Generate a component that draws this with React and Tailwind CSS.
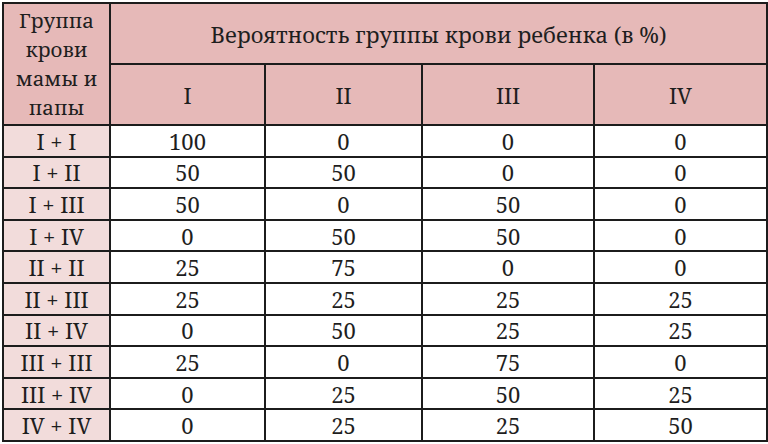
import React from 'react';

const rows = [
  ['I + I', '100', '0', '0', '0'],
  ['I + II', '50', '50', '0', '0'],
  ['I + III', '50', '0', '50', '0'],
  ['I + IV', '0', '50', '50', '0'],
  ['II + II', '25', '75', '0', '0'],
  ['II + III', '25', '25', '25', '25'],
  ['II + IV', '0', '50', '25', '25'],
  ['III + III', '25', '0', '75', '0'],
  ['III + IV', '0', '25', '50', '25'],
  ['IV + IV', '0', '25', '25', '50'],
];

const cell =
  "border-2 border-[#1c1c1c] text-center align-middle p-0 font-['Noto_Serif','DejaVu_Serif',serif] text-[22px] text-[#1e1e1e] font-normal";

const App = () => {
  return (
    <div className="w-[768px] h-[444px] bg-white pt-[2px] pl-[2px]">
      <table className="table-fixed border-collapse w-[764px] leading-none">
        <colgroup>
          <col className="w-[107px]" />
          <col className="w-[155px]" />
          <col className="w-[157px]" />
          <col className="w-[172px]" />
          <col className="w-[173px]" />
        </colgroup>
        <thead>
          <tr className="h-[61px] bg-[#e6b9b8]">
            <th rowSpan={2} className={`${cell} !text-[20.5px] leading-[29px]`}>
              Группа<br />крови<br />мамы и<br />папы
            </th>
            <th colSpan={4} className={cell}>
              Вероятность группы крови ребенка (в %)
            </th>
          </tr>
          <tr className="h-[61px] bg-[#e6b9b8]">
            <th className={cell}>I</th>
            <th className={cell}>II</th>
            <th className={cell}>III</th>
            <th className={cell}>IV</th>
          </tr>
        </thead>
        <tbody>
          {rows.map((r) => (
            <tr key={r[0]} className="h-[31.6px]">
              <td className={`${cell} bg-[#f2dcdb]`}>{r[0]}</td>
              {r.slice(1).map((v, i) => (
                <td key={i} className={`${cell} bg-white`}>{v}</td>
              ))}
            </tr>
          ))}
        </tbody>
      </table>
    </div>
  );
};

export default App;
